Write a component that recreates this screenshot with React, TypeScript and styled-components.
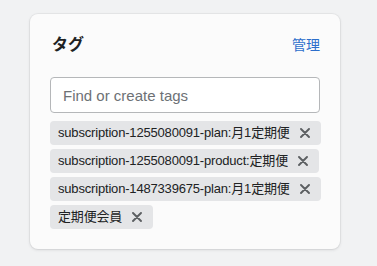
import React from "react";
import styled, { createGlobalStyle } from "styled-components";

const GlobalStyle = createGlobalStyle`
  html, body {
    margin: 0;
    padding: 0;
    background: #f1f2f3;
  }
  body {
    font-family: "Liberation Sans", "Noto Sans CJK JP", sans-serif;
    color: #202223;
  }
`;

const tags = [
  "subscription-1255080091-plan:月1定期便",
  "subscription-1255080091-product:定期便",
  "subscription-1487339675-plan:月1定期便",
  "定期便会員",
];

const Close = () => (
  <svg width="10" height="10" viewBox="0 0 10 10">
    <path d="M1 1 L9 9 M9 1 L1 9" stroke="#5c5f62" strokeWidth="1.9" strokeLinecap="round" />
  </svg>
);

const App = () => {
  return (
    <Page>
      <GlobalStyle />
      <Card>
        <Header>
          <Title>タグ</Title>
          <Manage href="#">管理</Manage>
        </Header>
        <Input placeholder="Find or create tags" />
        <TagList>
          {tags.map((t) => (
            <Tag key={t}>
              <Label>{t}</Label>
              <Remove>
                <Close />
              </Remove>
            </Tag>
          ))}
        </TagList>
      </Card>
    </Page>
  );
};
export default App;

const Page = styled.div`
  padding: 14px 0 0 30px;
  height: 266px;
  box-sizing: border-box;
`;

const Card = styled.div`
  width: 310px;
  box-sizing: border-box;
  background: #fbfbfb;
  border-radius: 8px;
  box-shadow: 0 0 0 1px rgba(63, 63, 68, 0.05), 0 1px 3px rgba(63, 63, 68, 0.15);
  padding: 20px;
  display: flex;
  flex-direction: column;
`;

const Header = styled.div`
  display: flex;
  justify-content: space-between;
  align-items: center;
  height: 22px;
  margin-bottom: 21px;
`;

const Title = styled.h2`
  margin: 0;
  font-size: 16px;
  font-weight: 700;
  line-height: 22px;
  padding-left: 2px;
`;

const Manage = styled.a`
  font-size: 14px;
  color: #2c6ecb;
  text-decoration: none;
  line-height: 20px;
`;

const Input = styled.input`
  height: 36px;
  box-sizing: border-box;
  width: 270px;
  border: 1px solid #b5b7b9;
  border-radius: 4px;
  background: #fff;
  padding: 0 12px;
  font-family: "Liberation Sans", "Noto Sans CJK JP", sans-serif;
  font-size: 15px;
  color: #202223;
  outline: none;
  &::placeholder {
    color: #6d7175;
  }
`;

const TagList = styled.div`
  margin-top: 8px;
  display: flex;
  flex-direction: column;
  align-items: flex-start;
  gap: 4px;
`;

const Tag = styled.div`
  display: inline-flex;
  align-items: center;
  height: 24px;
  box-sizing: border-box;
  background: #e4e5e7;
  border-radius: 4px;
  padding-left: 8px;
`;

const Label = styled.span`
  max-width: 240px;
  font-size: 13px;
  letter-spacing: -0.18px;
  line-height: 24px;
  white-space: nowrap;
  overflow: hidden;
  text-overflow: ellipsis;
`;

const Remove = styled.button`
  flex: none;
  height: 24px;
  border: none;
  background: transparent;
  padding: 0 11px 0 10px;
  display: flex;
  align-items: center;
  justify-content: center;
  cursor: pointer;
`;
